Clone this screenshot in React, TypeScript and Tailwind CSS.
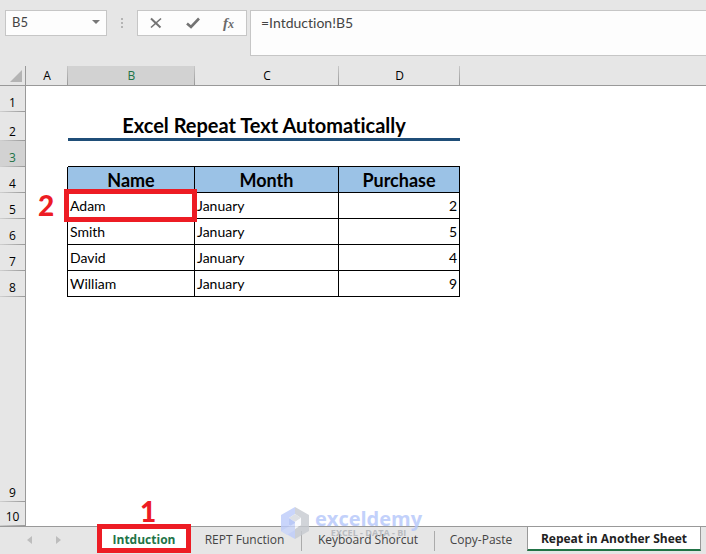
import { ReactNode } from 'react';

const people = [
  { row: 5, name: 'Adam', month: 'January', purchase: 2 },
  { row: 6, name: 'Smith', month: 'January', purchase: 5 },
  { row: 7, name: 'David', month: 'January', purchase: 4 },
  { row: 8, name: 'William', month: 'January', purchase: 9 },
];

const dataCell = 'border-r border-b border-black px-0.5 py-0 font-["Lato",sans-serif] text-[14px] leading-5';
const headCell =
  'border-r border-b border-black bg-[#9bc2e6] p-0 text-center font-["Lato",sans-serif] text-[18px] leading-5 font-bold';

function FormulaBar() {
  return (
    <header className="flex h-[66px] items-start pt-2.5 pl-[5px] font-['Lato',sans-serif] [font-variant-ligatures:none]">
      <div className="flex h-[26px] w-[102px] items-center border border-[#c6c6c6] bg-[#fdfdfd]">
        <input
          aria-label="Name box"
          defaultValue="B5"
          className="w-full min-w-0 flex-1 bg-transparent pl-1.5 text-[13px] text-[#444] outline-none"
        />
        <button aria-label="Open name list" className="px-1.5">
          <svg width="8" height="26" viewBox="0 0 8 26">
            <path d="M0 10h8L4 14z" fill="#777" />
          </svg>
        </button>
      </div>
      <svg className="mx-3.5" width="2" height="26" viewBox="0 0 2 26" fill="#b4b4b4">
        <path d="M0 8h2v2H0zM0 12h2v2H0zM0 16h2v2H0z" />
      </svg>
      <div className="flex h-[26px] w-[110px] items-center justify-between border border-[#c6c6c6] bg-[#fdfdfd] px-3">
        <button aria-label="Cancel">
          <svg width="12" height="12" viewBox="0 0 12 12" fill="none" stroke="#737373">
            <path d="M1 1.5L10.5 10.5" strokeWidth="2" />
            <path d="M11 1.5L1 10.5" strokeWidth="1.6" />
          </svg>
        </button>
        <button aria-label="Enter">
          <svg width="14" height="12" viewBox="0 0 14 12" fill="none" stroke="#737373">
            <path d="M1 6.5L5 10L13 1.5" strokeWidth="2.6" />
          </svg>
        </button>
        <button
          aria-label="Insert function"
          className="font-['Liberation_Serif',serif] text-[15px] leading-5 font-bold text-[#6a6a6a] italic"
        >
          f<span className="text-[12px]">x</span>
        </button>
      </div>
      <textarea
        aria-label="Formula"
        defaultValue="=Intduction!B5"
        className="ml-[3px] h-[46px] min-w-0 flex-1 resize-none border border-r-0 border-[#c6c6c6] bg-[#fdfdfd] px-2.5 py-[3px] text-[14px] leading-[18px] text-[#444] outline-none"
      />
    </header>
  );
}

function ColumnHead({ label, active }: { label?: string; active?: boolean }) {
  return (
    <th
      scope="col"
      className={`relative h-5 border-b border-[#999] p-0 text-[12px] leading-4 font-normal ${
        active ? 'bg-[#d2d2d2] text-[#217346]' : 'bg-[#e6e6e6] text-black'
      }`}
    >
      {label}
      {label && <span className="absolute top-0 right-0 h-full w-px bg-linear-to-b from-[#c8c8c8] to-[#999]" />}
    </th>
  );
}

function RowHead({ row, active }: { row: number; active?: boolean }) {
  return (
    <th
      scope="row"
      className={`relative border-r border-[#999] p-0 align-bottom text-[12px] leading-[18px] font-normal ${
        active ? 'bg-[#d2d2d2] text-[#217346]' : 'bg-[#e6e6e6] text-black'
      }`}
    >
      {row}
      <span className="absolute bottom-0 left-0 h-px w-full bg-linear-to-r from-[#d0d0d0] to-[#999]" />
    </th>
  );
}

function Sheet() {
  return (
    <table className="w-full table-fixed border-separate border-spacing-0 bg-white [font-variant-ligatures:none]">
      <colgroup>
        <col className="w-[26px]" />
        <col className="w-[42px]" />
        <col className="w-[127px]" />
        <col className="w-[144px]" />
        <col className="w-[121px]" />
        <col />
      </colgroup>
      <thead>
        <tr>
          <th className="h-5 border-r border-b border-[#999] bg-[#e6e6e6] p-0">
            <svg className="ml-2.5" width="12" height="12" viewBox="0 0 12 12">
              <path d="M12 0v12H0z" fill="#b4b4b4" />
            </svg>
          </th>
          <ColumnHead label="A" />
          <ColumnHead label="B" active />
          <ColumnHead label="C" />
          <ColumnHead label="D" />
          <ColumnHead />
        </tr>
      </thead>
      <tbody>
        <tr className="h-[26px]">
          <RowHead row={1} />
          <td colSpan={5} />
        </tr>
        <tr className="h-[29px]">
          <RowHead row={2} />
          <td />
          <td
            colSpan={3}
            className="border-b-3 border-[#1f4e78] p-0 text-center font-['Lato',sans-serif] text-[20px] leading-6 font-bold"
          >
            Excel Repeat Text Automatically
          </td>
          <td />
        </tr>
        <tr className="h-[26px]">
          <RowHead row={3} active />
          <td />
          <td colSpan={3} className="border-b border-black p-0" />
          <td />
        </tr>
        <tr className="h-[26px]">
          <RowHead row={4} />
          <td className="border-r border-black p-0" />
          <td className={headCell}>Name</td>
          <td className={headCell}>Month</td>
          <td className={headCell}>Purchase</td>
          <td />
        </tr>
        {people.map((p) => (
          <tr key={p.row} className="h-[26px]">
            <RowHead row={p.row} />
            <td className="border-r border-black p-0" />
            <td className={`relative ${dataCell}`}>
              {p.name}
              {p.row === 5 && (
                <>
                  <span className="absolute -inset-y-1 -right-[3px] -left-1 z-10 border-5 border-[#ed1c24]" />
                  <Marker className="-left-[30px] top-0">2</Marker>
                </>
              )}
            </td>
            <td className={dataCell}>{p.month}</td>
            <td className={`text-right ${dataCell}`}>{p.purchase}</td>
            <td />
          </tr>
        ))}
        <tr className="h-[205px]">
          <RowHead row={9} />
          <td colSpan={5} />
        </tr>
        <tr className="h-6">
          <RowHead row={10} />
          <td colSpan={5} />
        </tr>
      </tbody>
    </table>
  );
}

function Marker({ className, children }: { className: string; children: ReactNode }) {
  return (
    <span className={`absolute font-['Lato',sans-serif] text-[28px] leading-6 font-black text-[#ed1c24] ${className}`}>
      {children}
    </span>
  );
}

function SheetTabs() {
  return (
    <nav className="relative flex h-7 items-start border-t border-[#999] text-[12px] leading-[26px] text-[#444]">
      <button aria-label="Previous sheet" className="ml-[27px]">
        <svg width="5" height="26" viewBox="0 0 5 26">
          <path d="M5 9v8L0 13z" fill="#bdbdbd" />
        </svg>
      </button>
      <button aria-label="Next sheet" className="ml-6">
        <svg width="5" height="26" viewBox="0 0 5 26">
          <path d="M0 9v8l5-4z" fill="#bdbdbd" />
        </svg>
      </button>
      <button className="relative ml-[39px] w-[88px] bg-white font-bold text-[#217346]">
        Intduction
        <span className="absolute -inset-x-[3px] -top-[3px] h-[29px] border-5 border-[#ed1c24]" />
        <Marker className="-top-7 left-10">1</Marker>
      </button>
      <button className="w-[113px]">REPT Function</button>
      <span className="mt-1 h-5 w-px bg-[#ababab]" />
      <button className="w-[132px]">Keyboard Shorcut</button>
      <span className="mt-1 h-5 w-px bg-[#ababab]" />
      <button className="w-[92px]">Copy-Paste</button>
      <button className="h-6 w-[174px] border-x border-b-2 border-x-[#999] border-b-[#217346] bg-white leading-6 font-bold text-[#222]">
        Repeat in Another Sheet
      </button>
      <Watermark />
    </nav>
  );
}

function Watermark() {
  return (
    <div className="pointer-events-none absolute -top-5 left-[281px] flex items-center gap-1.5 opacity-80">
      <svg width="28" height="32" viewBox="0 0 28 32">
        <path d="M14 0L0 8v16l14 8V22l-6-4v-7l6-4z" fill="#bccbfb" />
        <path d="M14 0l14 8v16l-14 8V22l6-4v-7l-6-4z" fill="#c6cad0" />
        <path d="M14 7l6 4-6 4-6-4z" fill="#d5d9df" />
        <path d="M8 11l6 4v7l-6-4z" fill="#a9bcf5" />
        <path d="M20 11l-6 4v7l6-4z" fill="#f8fafd" />
        <path d="M0 24l14-8v7l-8 5z" fill="#c9d5fb" />
      </svg>
      <div className="text-center font-bold">
        <div className="text-[20px] leading-5 text-[#b4c6fb]">exceldemy</div>
        <div className="text-[9px] leading-2 text-[#aeb2b8]">EXCEL - DATA - BI</div>
      </div>
    </div>
  );
}

export default function App() {
  return (
    <div className="min-h-screen bg-[#e6e6e6] font-['Open_Sans',sans-serif] text-black">
      <FormulaBar />
      <Sheet />
      <SheetTabs />
    </div>
  );
}
